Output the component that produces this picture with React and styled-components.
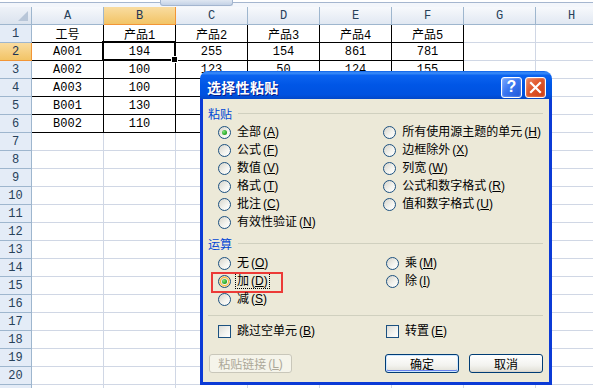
import React from "react";
import styled, { createGlobalStyle } from "styled-components";

const GlobalStyle = createGlobalStyle`
  html, body {
    margin: 0;
    padding: 0;
    background: #ffffff;
    overflow: hidden;
  }
`;

const COLS = ["A", "B", "C", "D", "E", "F", "G", "H"];
const ROW_COUNT = 21;
const LABELLED_ROWS = 20;

const DATA = {
  1: ["工号", "产品1", "产品2", "产品3", "产品4", "产品5"],
  2: ["A001", "194", "255", "154", "861", "781"],
  3: ["A002", "100", "123", "50", "124", "155"],
  4: ["A003", "100", "", "", "", ""],
  5: ["B001", "130", "", "", "", ""],
  6: ["B002", "110", "", "", "", ""],
};

const PASTE_LEFT = [
  { label: "全部", key: "A", checked: true },
  { label: "公式", key: "F" },
  { label: "数值", key: "V" },
  { label: "格式", key: "T" },
  { label: "批注", key: "C" },
  { label: "有效性验证", key: "N" },
];
const PASTE_RIGHT = [
  { label: "所有使用源主题的单元", key: "H" },
  { label: "边框除外", key: "X" },
  { label: "列宽", key: "W" },
  { label: "公式和数字格式", key: "R" },
  { label: "值和数字格式", key: "U" },
];
const OP_LEFT = [
  { label: "无", key: "O" },
  { label: "加", key: "D", checked: true, hot: true, marked: true },
  { label: "减", key: "S" },
];
const OP_RIGHT = [
  { label: "乘", key: "M" },
  { label: "除", key: "I" },
];

const Page = styled.div`
  position: relative;
  width: 593px;
  height: 388px;
  overflow: hidden;
  background: #ffffff;
`;

const TopStrip = styled.div`
  height: 7px;
  box-sizing: border-box;
  border-top: 2px solid #ffffff;
  background: linear-gradient(to bottom, #a5b6cf 0, #a5b6cf 1px, #f3f6fb 1px);
  display: flex;
`;

const NameTab = styled.div`
  margin-left: 160px;
  margin-top: -2px;
  width: 73px;
  height: 6px;
  box-sizing: border-box;
  background: linear-gradient(to bottom, #dfe7f2, #c4d2e6);
  border: 1px solid #a3b5cf;
  border-top: none;
  border-radius: 0 0 3px 3px;
`;

const Sheet = styled.div`
  display: grid;
  grid-template-columns: 32px repeat(8, 72px);
  grid-auto-rows: 18px;
  font-family: "Liberation Mono", "Noto Sans CJK SC", monospace;
  font-size: 12px;
  color: #000000;
`;

const Cell = styled.div`
  position: relative;
  box-sizing: border-box;
  display: flex;
  align-items: center;
  justify-content: center;
  border-right: 1px solid ${(p) => (p.$boxed ? "#000000" : "#d0d7e5")};
  border-bottom: 1px solid ${(p) => (p.$boxed ? "#000000" : "#d0d7e5")};
  white-space: nowrap;

  &::after {
    content: "";
    display: ${(p) => (p.$active ? "block" : "none")};
    position: absolute;
    left: -2px;
    top: -2px;
    right: -1px;
    bottom: -1px;
    border: 2px solid #000000;
    z-index: 1;
  }
  &::before {
    content: "";
    display: ${(p) => (p.$active ? "block" : "none")};
    position: absolute;
    right: -3px;
    bottom: -3px;
    width: 5px;
    height: 5px;
    background: #000000;
    border: 1px solid #ffffff;
    z-index: 2;
  }
`;

const HeadCell = styled.div`
  box-sizing: border-box;
  display: flex;
  align-items: center;
  justify-content: center;
  color: ${(p) => (p.$active ? "#1c3454" : "#27415a")};
  background: ${(p) =>
    p.$active
      ? "linear-gradient(to bottom, #f9dca0, #f2c466)"
      : "linear-gradient(to bottom, #f7f9fc, #e1e8f2)"};
  border-right: 1px solid ${(p) => (p.$active ? "#f29536" : "#9eb6ce")};
  border-bottom: 1px solid ${(p) => (p.$active ? "#f29536" : "#9eb6ce")};
`;

const RowHead = styled(HeadCell)`
  background: ${(p) =>
    p.$active ? "linear-gradient(to bottom, #f9dca0, #f2c466)" : "#e4ecf7"};
`;

const Corner = styled.div`
  box-sizing: border-box;
  background: linear-gradient(to bottom, #eef2f8, #dbe3ee);
  border-right: 1px solid #9eb6ce;
  border-bottom: 1px solid #9eb6ce;
  display: flex;
  align-items: flex-end;
  justify-content: flex-end;
  padding: 0 3px 3px 0;
`;

const CornerMark = styled.span`
  width: 0;
  height: 0;
  border-left: 10px solid transparent;
  border-bottom: 10px solid #b8c6d8;
`;

/* dialog */

const Dialog = styled.div`
  position: absolute;
  left: 200px;
  top: 71px;
  width: 352px;
  height: 314px;
  display: flex;
  flex-direction: column;
  z-index: 5;
  font-family: "Liberation Sans", "Noto Sans CJK SC", sans-serif;
  font-size: 12px;
  color: #000000;
`;

const TitleBar = styled.div`
  flex: none;
  height: 28px;
  box-sizing: border-box;
  padding: 4px 6px 0 7px;
  display: flex;
  align-items: center;
  border-radius: 8px 8px 0 0;
  background: linear-gradient(
    to bottom,
    #0a5fe8 0%,
    #3d8ffa 7%,
    #0b63ef 16%,
    #0056e6 50%,
    #0052e0 85%,
    #0347c8 100%
  );
`;

const Title = styled.div`
  flex: 1;
  color: #ffffff;
  font-family: "Noto Sans CJK SC", sans-serif;
  font-weight: 700;
  font-size: 14px;
  letter-spacing: 0.3px;
  text-shadow: 1px 1px 0 #0a1a86;
`;

const CapButton = styled.div`
  width: 21px;
  height: 21px;
  box-sizing: border-box;
  margin-left: ${(p) => (p.$close ? "3px" : "0")};
  border: 1px solid #ffffff;
  border-radius: 3px;
  display: flex;
  align-items: center;
  justify-content: center;
  color: #ffffff;
  font-family: "Liberation Sans", sans-serif;
  font-weight: 700;
  font-size: 16px;
  background: ${(p) =>
    p.$close
      ? "linear-gradient(135deg, #ec8a67 0%, #e1572b 45%, #cc3d12 100%)"
      : "linear-gradient(135deg, #7aa8ff 0%, #3b77f2 45%, #1e55d6 100%)"};
  box-shadow: inset 0 0 2px rgba(255, 255, 255, 0.6);
`;

const Body = styled.div`
  flex: 1;
  background: #ece9d8;
  border: 3px solid #0b3ad6;
  border-top: none;
  padding: 7px 6px 0 5px;
  display: flex;
  flex-direction: column;
`;

const GroupHead = styled.div`
  display: flex;
  align-items: center;
  gap: 6px;
  height: 14px;
  margin-top: ${(p) => p.$top || 0}px;
  color: #0046d5;
  font-family: "Noto Sans CJK SC", sans-serif;
`;

const Rule = styled.div`
  flex: 1;
  height: 1px;
  background: #d0d0bf;
`;

const Separator = styled.div`
  height: 1px;
  margin-top: 7px;
  background: #d0d0bf;
`;

const Columns = styled.div`
  display: flex;
  padding-left: 10px;
  margin-top: ${(p) => p.$top || 0}px;
`;

const Column = styled.div`
  width: ${(p) => (p.$wide ? "168px" : "auto")};
  display: flex;
  flex-direction: column;
`;

const Option = styled.div`
  position: relative;
  height: 18px;
  display: flex;
  align-items: center;
  gap: 4px;
  align-self: flex-start;
  white-space: nowrap;

  &::after {
    content: "";
    display: ${(p) => (p.$marked ? "block" : "none")};
    position: absolute;
    left: -7px;
    top: 0;
    right: -13px;
    bottom: -3px;
    border: 2px solid #ec3a37;
  }
`;

const Label = styled.span`
  padding: 1px;
  border: 1px dotted ${(p) => (p.$focus ? "#000000" : "transparent")};
  line-height: 12px;
`;

const Radio = styled.span`
  flex: none;
  width: 13px;
  height: 13px;
  box-sizing: border-box;
  border-radius: 50%;
  border: 1px solid #1c5180;
  background: linear-gradient(135deg, #d6d4cb 0%, #f4f4f0 60%, #ffffff 100%);
  box-shadow: ${(p) =>
    p.$hot ? "inset 0 0 0 1px #fbe2a4, inset 0 0 0 2px #f6b53c" : "none"};
  display: flex;
  align-items: center;
  justify-content: center;

  &::after {
    content: "";
    display: ${(p) => (p.$checked ? "block" : "none")};
    width: 5px;
    height: 5px;
    border-radius: 50%;
    background: radial-gradient(circle at 35% 35%, #7ee67a, #21a121 70%);
  }
`;

const Check = styled.span`
  flex: none;
  width: 13px;
  height: 13px;
  box-sizing: border-box;
  border: 1px solid #1c5180;
  background: linear-gradient(135deg, #dcdcd7 0%, #f4f4f0 60%, #ffffff 100%);
`;

const CheckRow = styled(Columns)`
  margin-top: 6px;
`;

const ButtonRow = styled.div`
  display: flex;
  align-items: center;
  justify-content: space-between;
  margin-top: 14px;
  padding-left: 1px;
`;

const ButtonGroup = styled.div`
  display: flex;
  gap: 10px;
`;

const Button = styled.div`
  width: ${(p) => p.$w || 74}px;
  height: 19px;
  box-sizing: border-box;
  display: flex;
  align-items: center;
  justify-content: center;
  border-radius: 3px;
  border: 1px solid ${(p) => (p.$disabled ? "#c9c7ba" : "#003c74")};
  color: ${(p) => (p.$disabled ? "#aca899" : "#000000")};
  background: ${(p) =>
    p.$disabled
      ? "#f5f4ea"
      : "linear-gradient(to bottom, #ffffff 0%, #f3f3ef 60%, #e5e4dc 90%, #d6d0c5 100%)"};
  box-shadow: ${(p) =>
    p.$default ? "inset 0 0 0 1px #cee7ff, inset 0 -1px 0 1px #6982ee" : "none"};
`;

const AccelText = styled.span`
  margin-left: 2px;
`;

const Accel = ({ k }) => (
  <AccelText>
    (<u>{k}</u>)
  </AccelText>
);

const OptionItem = ({ item }) => (
  <Option $marked={item.marked}>
    <Radio $checked={item.checked} $hot={item.hot} />
    <Label $focus={item.marked}>
      {item.label}
      <Accel k={item.key} />
    </Label>
  </Option>
);

const CheckItem = ({ label, k }) => (
  <Option>
    <Check />
    <Label>
      {label}
      <Accel k={k} />
    </Label>
  </Option>
);

const Spreadsheet = () => {
  const cells = [];
  cells.push(
    <Corner key="corner">
      <CornerMark />
    </Corner>
  );
  COLS.forEach((c) => {
    cells.push(
      <HeadCell key={"h" + c} $active={c === "B"}>
        {c}
      </HeadCell>
    );
  });
  for (let r = 1; r <= ROW_COUNT; r++) {
    // the last row is only a sliver at the bottom edge, its number is not visible
    cells.push(
      <RowHead key={"r" + r} $active={r === 2}>
        {r <= LABELLED_ROWS ? r : ""}
      </RowHead>
    );
    COLS.forEach((c, i) => {
      const row = DATA[r];
      const boxed = !!row && i < 6;
      cells.push(
        <Cell key={c + r} $boxed={boxed} $active={r === 2 && c === "B"}>
          {boxed ? row[i] : ""}
        </Cell>
      );
    });
  }
  return <Sheet>{cells}</Sheet>;
};

const PasteDialog = () => (
  <Dialog>
    <TitleBar>
      <Title>选择性粘贴</Title>
      <CapButton>?</CapButton>
      <CapButton $close>
        <svg width="13" height="13" viewBox="0 0 13 13">
          <path
            d="M2 2 L11 11 M11 2 L2 11"
            stroke="#ffffff"
            strokeWidth="2.2"
            strokeLinecap="square"
          />
        </svg>
      </CapButton>
    </TitleBar>
    <Body>
      <GroupHead>
        <span>粘贴</span>
        <Rule />
      </GroupHead>
      <Columns $top={3}>
        <Column $wide>
          {PASTE_LEFT.map((it) => (
            <OptionItem key={it.key} item={it} />
          ))}
        </Column>
        <Column>
          {PASTE_RIGHT.map((it) => (
            <OptionItem key={it.key} item={it} />
          ))}
        </Column>
      </Columns>
      <GroupHead $top={5}>
        <span>运算</span>
        <Rule />
      </GroupHead>
      <Columns $top={4}>
        <Column $wide>
          {OP_LEFT.map((it) => (
            <OptionItem key={it.key} item={it} />
          ))}
        </Column>
        <Column>
          {OP_RIGHT.map((it) => (
            <OptionItem key={it.key} item={it} />
          ))}
        </Column>
      </Columns>
      <Separator />
      <CheckRow>
        <Column $wide>
          <CheckItem label="跳过空单元" k="B" />
        </Column>
        <Column>
          <CheckItem label="转置" k="E" />
        </Column>
      </CheckRow>
      <ButtonRow>
        <Button $disabled $w={83}>
          粘贴链接
          <Accel k="L" />
        </Button>
        <ButtonGroup>
          <Button $default>确定</Button>
          <Button>取消</Button>
        </ButtonGroup>
      </ButtonRow>
    </Body>
  </Dialog>
);

export default function App() {
  return (
    <Page>
      <GlobalStyle />
      <TopStrip>
        <NameTab />
      </TopStrip>
      <Spreadsheet />
      <PasteDialog />
    </Page>
  );
}
